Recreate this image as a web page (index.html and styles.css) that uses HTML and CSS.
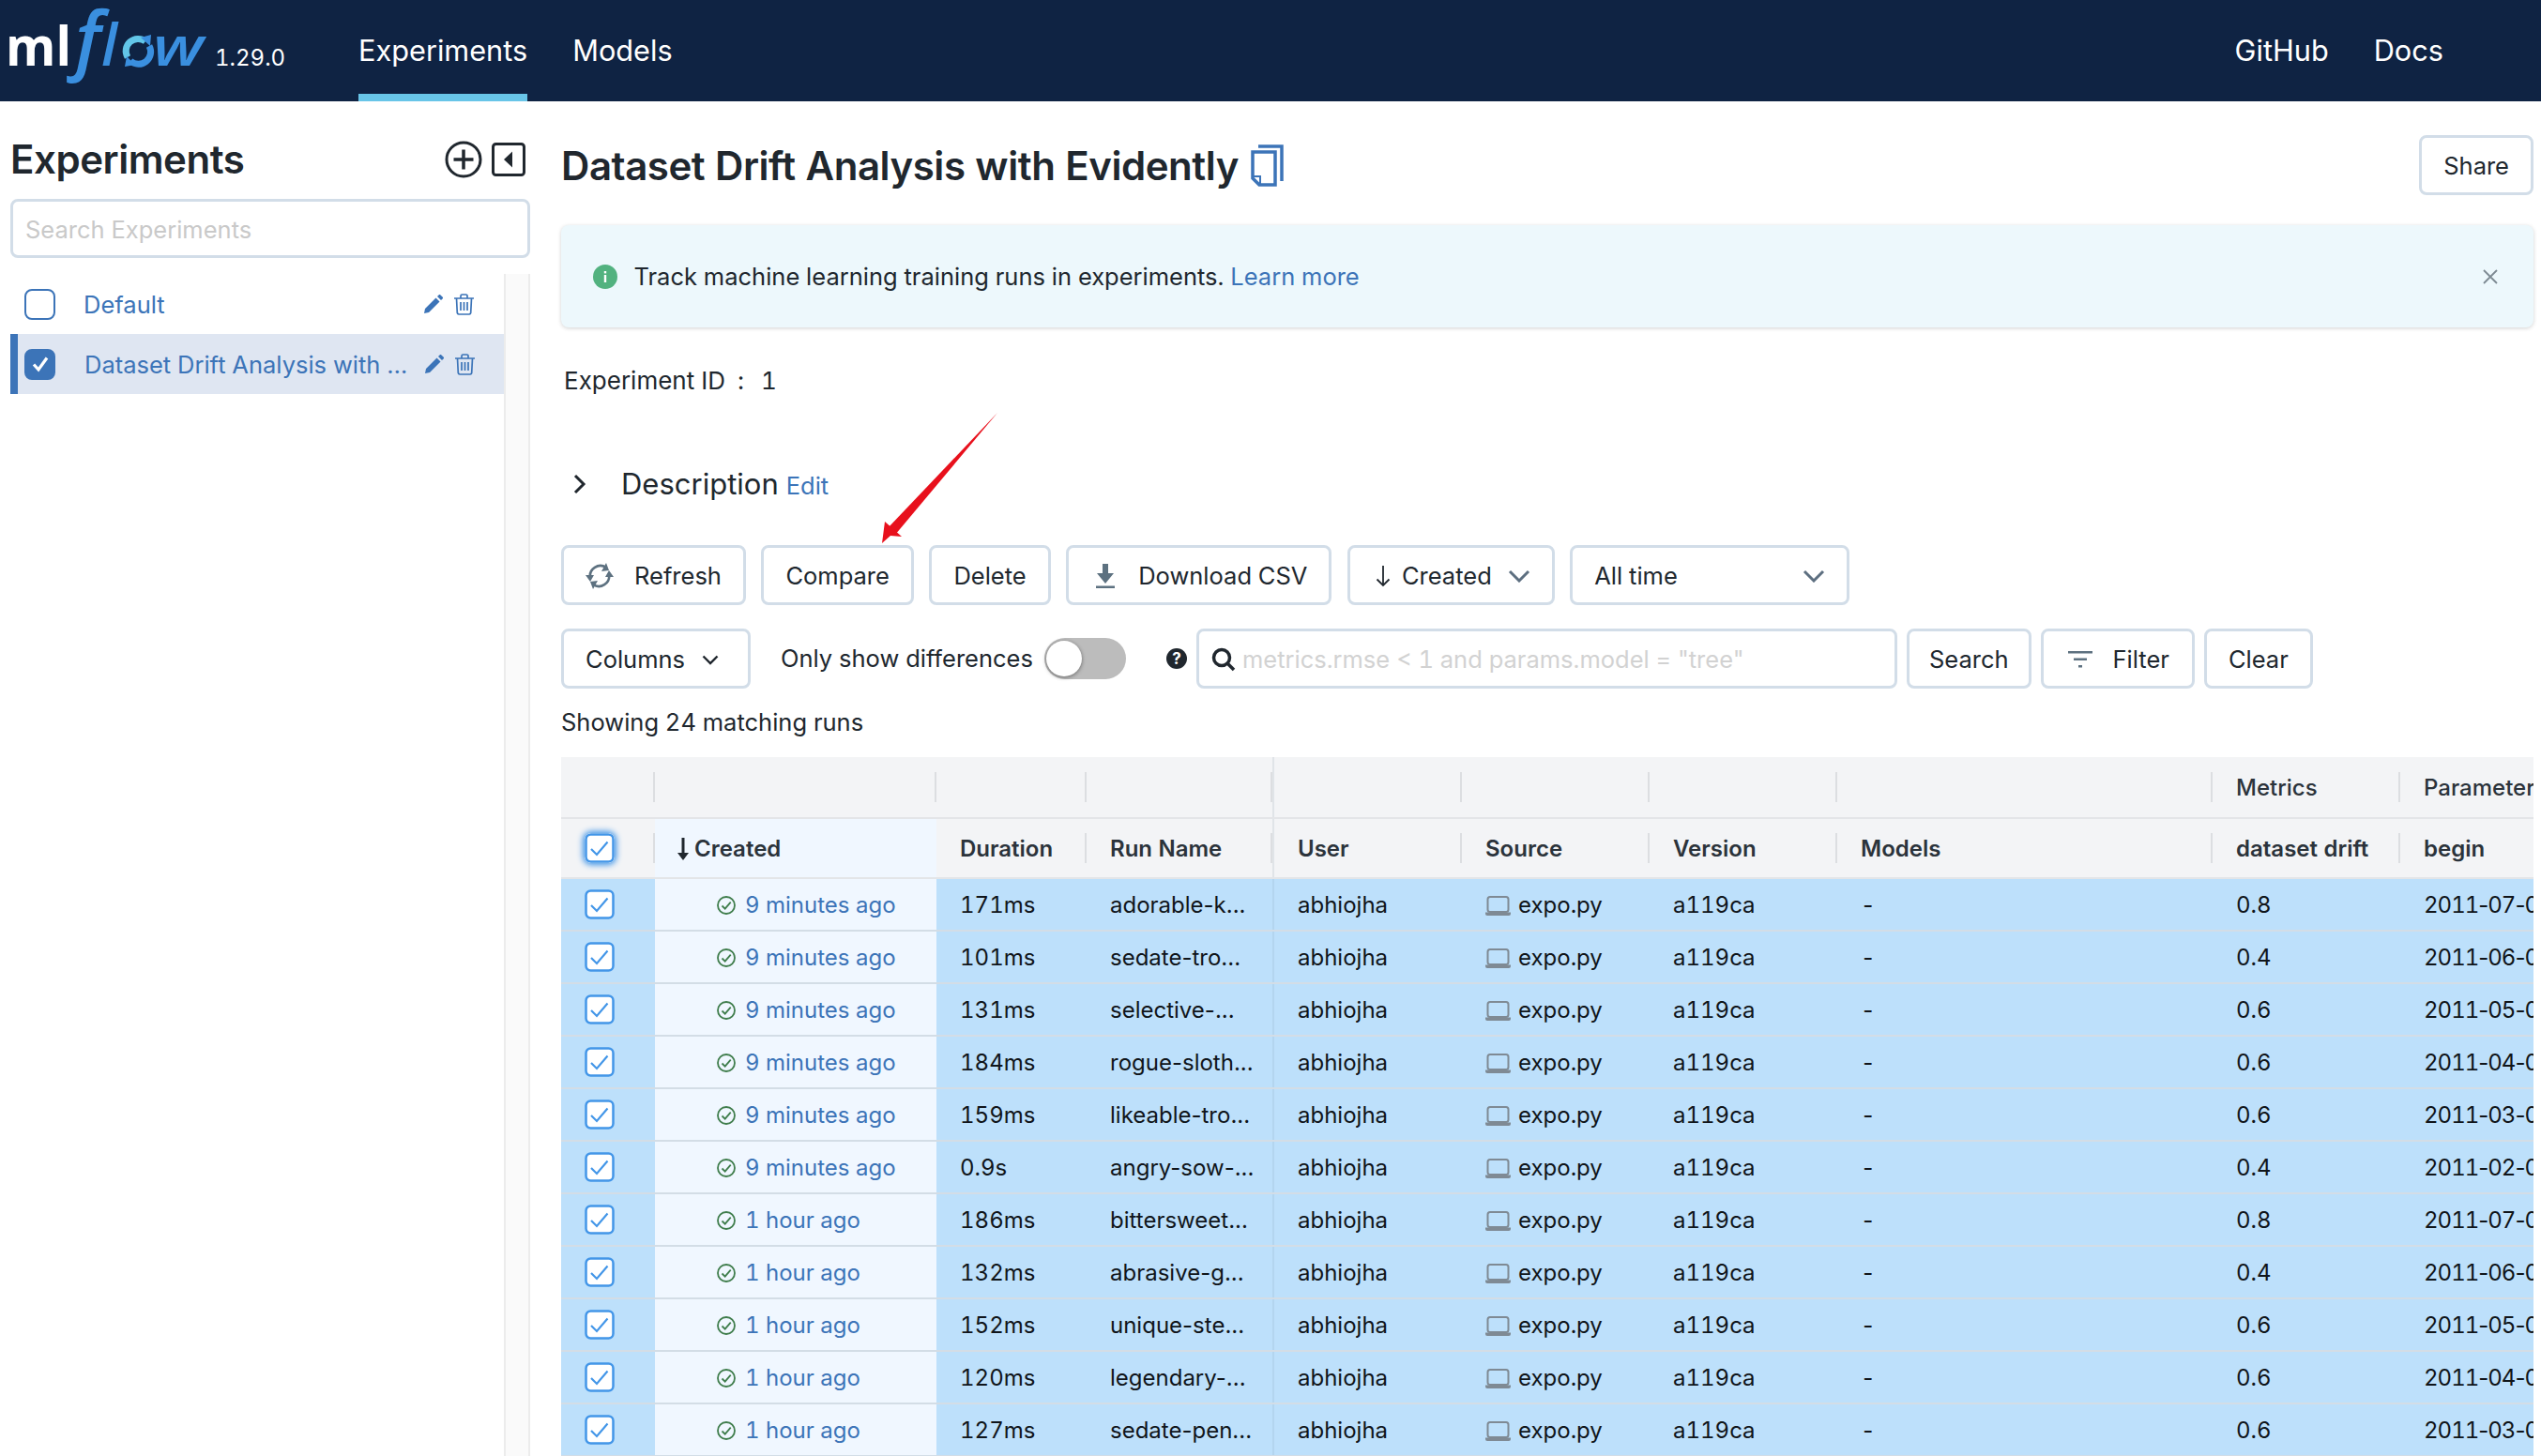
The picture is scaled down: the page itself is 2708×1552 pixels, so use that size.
FILE: index.html
```html
<!DOCTYPE html>
<html lang="en">
<head>
<meta charset="utf-8">
<title>MLflow</title>
<link rel="stylesheet" href="styles.css">
</head>
<body>
<svg class="defs" width="0" height="0">
  <symbol id="rowcheck" viewBox="0 0 32 32"><rect x="1.500" y="1.500" width="29" height="29" rx="5" fill="#fff" stroke="#4396e8" stroke-width="2.500"/><path d="M7 17l6 6L24.500 9.500" fill="none" stroke="#4396e8" stroke-width="2.200"/></symbol>
  <symbol id="ok" viewBox="0 0 20 20"><circle cx="10" cy="10" r="9" fill="none" stroke="#3f7d4c" stroke-width="1.800"/><path d="M5.500 10.500l3.200 3.200 6-7" fill="none" stroke="#3f7d4c" stroke-width="1.800"/></symbol>
  <symbol id="laptop" viewBox="0 0 27 21"><rect x="2.500" y="1" width="22" height="16" rx="2.500" fill="none" stroke="#7f8a94" stroke-width="2"/><path d="M0 17.500h27v1.500a2 2 0 0 1-2 2H2a2 2 0 0 1-2-2z" fill="#7f8a94"/></symbol>
  <symbol id="pencil" viewBox="0 0 20 20"><path d="M0 20l1-5L12.500 3.500l4 4L5 19zM14 2l1.800-1.800a1 1 0 0 1 1.400 0l2.600 2.600a1 1 0 0 1 0 1.400L18 6z" fill="#3c74b8"/></symbol>
  <symbol id="trash" viewBox="0 0 21 23"><path d="M0 5h21M7 5V2.500A1.500 1.500 0 0 1 8.500 1h4A1.500 1.500 0 0 1 14 2.500V5M2.500 5l.8 15.500A1.800 1.800 0 0 0 5 22h11a1.800 1.800 0 0 0 1.700-1.500L18.500 5M7 9v9M10.500 9v9M14 9v9" fill="none" stroke="#3c74b8" stroke-width="1.700"/></symbol>
</svg>

<header class="topbar">
  <div class="brand">
    <svg class="logo" width="222" height="92" viewBox="0 0 222 92">
      <text x="6" y="70" class="logo-ml" textLength="70" lengthAdjust="spacingAndGlyphs">ml</text>
      <text x="80" y="70" class="logo-f">f</text>
      <text x="108" y="70" class="logo-l">l</text>
      <path d="M136 61a13 13 0 0 1 19-17" fill="none" stroke="#62c6e8" stroke-width="7"/>
      <path d="M159 49a13 13 0 0 1-20 16" fill="none" stroke="#3a8fdf" stroke-width="7"/>
      <path d="M150 40l11-3-1 12zM144 69l-11 2 2-11z" fill="#3a8fdf"/>
      <text x="163" y="70" class="logo-w" textLength="54" lengthAdjust="spacingAndGlyphs">w</text>
    </svg>
    <span class="version">1.29.0</span>
  </div>
  <nav class="nav-left">
    <a class="nav-link active">Experiments</a>
    <a class="nav-link">Models</a>
  </nav>
  <nav class="nav-right">
    <a class="nav-link">GitHub</a>
    <a class="nav-link">Docs</a>
  </nav>
</header>

<div class="layout">
  <aside class="sidebar">
    <div class="side-head">
      <h2 class="side-title">Experiments</h2>
      <svg class="icon-plus" width="40" height="40" viewBox="0 0 40 40"><circle cx="20" cy="20" r="18" fill="none" stroke="#20272e" stroke-width="3"/><path d="M20 9.500v21M9.500 20h21" stroke="#20272e" stroke-width="3.500"/></svg>
      <svg class="icon-panel" width="36" height="36" viewBox="0 0 36 36"><rect x="1.500" y="1.500" width="33" height="33" rx="3" fill="none" stroke="#20272e" stroke-width="3"/><path d="M22 9.500v17L13 18z" fill="#20272e"/></svg>
    </div>
    <div class="side-search">Search Experiments</div>
    <div class="side-list-wrap">
      <ul class="side-list">
        <li class="side-row">
          <span class="box"></span>
          <span class="side-name">Default</span>
          <svg class="act-pencil" width="20" height="20"><use href="#pencil"/></svg>
          <svg class="act-trash" width="21" height="23"><use href="#trash"/></svg>
        </li>
        <li class="side-row selected">
          <span class="box checked"><svg width="20" height="20" viewBox="0 0 20 20"><path d="M3 10.500l5 5.500L17 3.500" fill="none" stroke="#fff" stroke-width="3.200"/></svg></span>
          <span class="side-name">Dataset Drift Analysis with Evidently</span>
          <svg class="act-pencil" width="20" height="20"><use href="#pencil"/></svg>
          <svg class="act-trash" width="21" height="23"><use href="#trash"/></svg>
        </li>
      </ul>
      <div class="side-scroll"></div>
    </div>
  </aside>

  <main class="main">
    <div class="title-row">
      <h1 class="page-title">Dataset Drift Analysis with Evidently</h1>
      <svg class="icon-copy" width="35" height="45" viewBox="0 0 35 45"><path d="M8 2h25v37" fill="none" stroke="#3c74b8" stroke-width="3.500"/><path d="M2 8h24v35H9l-7-7z" fill="none" stroke="#3c74b8" stroke-width="3.500"/><path d="M2 34h8v9" fill="none" stroke="#3c74b8" stroke-width="2"/></svg>
      <button class="btn share">Share</button>
    </div>

    <div class="banner">
      <svg class="icon-info" width="26" height="26" viewBox="0 0 26 26"><circle cx="13" cy="13" r="13" fill="#52b27f"/><rect x="11.800" y="11" width="2.400" height="8" fill="#fff"/><rect x="11.800" y="7" width="2.400" height="2.400" fill="#fff"/></svg>
      <span class="banner-text">Track machine learning training runs in experiments. <a class="link">Learn more</a></span>
      <svg class="icon-close" width="18" height="18" viewBox="0 0 18 18"><path d="M2 2l14 14M16 2L2 16" stroke="#7d8a92" stroke-width="1.800"/></svg>
    </div>

    <div class="exp-id"><span>Experiment ID</span><span class="colon">:</span><span>1</span></div>

    <div class="desc-row">
      <svg class="icon-chevron" width="14" height="22" viewBox="0 0 14 22"><path d="M2 2l9 9-9 9" fill="none" stroke="#20272e" stroke-width="3"/></svg>
      <span class="desc-label">Description</span>
      <a class="link desc-edit">Edit</a>
    </div>

    <div class="toolbar tb-one">
      <button class="btn"><svg class="btn-icon refresh" width="30" height="28" viewBox="0 0 30 28"><path d="M5 16a11 11 0 0 1 17-11M25 12a11 11 0 0 1-17 11" fill="none" stroke="#5d7180" stroke-width="2.600"/><path d="M22 0l3 8-8 1zM8 28l-3-8 8-1zM0 13h9l-4 7zM30 15h-9l4-7z" fill="#5d7180"/></svg>Refresh</button>
      <button class="btn">Compare</button>
      <button class="btn">Delete</button>
      <button class="btn"><svg class="btn-icon dl" width="22" height="26" viewBox="0 0 22 26"><path d="M8 0h6v10h6l-9 11-9-11h6zM1 23.500h20V26H1z" fill="#5d7180"/></svg>Download CSV</button>
      <button class="btn sel-created"><svg class="arrow-down" width="16" height="24" viewBox="0 0 16 24"><path d="M8 1v21M1.500 15.500L8 22l6.500-6.500" fill="none" stroke="#20272e" stroke-width="1.800"/></svg>Created<svg class="caret" width="24" height="14" viewBox="0 0 24 14"><path d="M2 2l10 10L22 2" fill="none" stroke="#5d6f80" stroke-width="3"/></svg></button>
      <button class="btn sel-time">All time<svg class="caret" width="24" height="14" viewBox="0 0 24 14"><path d="M2 2l10 10L22 2" fill="none" stroke="#5d6f80" stroke-width="3"/></svg></button>
    </div>

    <div class="toolbar tb-two">
      <button class="btn cols">Columns<svg class="caret-sm" width="18" height="11" viewBox="0 0 18 11"><path d="M1.500 1.500L9 9l7.500-7.500" fill="none" stroke="#20272e" stroke-width="2.400"/></svg></button>
      <span class="only-label">Only show differences</span>
      <span class="toggle"><span class="knob"></span></span>
      <svg class="icon-help" width="22" height="22" viewBox="0 0 22 22"><circle cx="11" cy="11" r="11" fill="#20272e"/><text x="11" y="17" class="help-mark">?</text></svg>
      <div class="query">
        <svg class="icon-search" width="26" height="26" viewBox="0 0 26 26"><circle cx="11" cy="11" r="8.500" fill="none" stroke="#20272e" stroke-width="3.500"/><path d="M17 17l7 7" stroke="#20272e" stroke-width="3.500"/></svg>
        <span class="placeholder">metrics.rmse &lt; 1 and params.model = "tree"</span>
      </div>
      <button class="btn tight">Search</button>
      <button class="btn filter-btn"><svg class="btn-icon filter" width="26" height="18" viewBox="0 0 26 18"><path d="M0 0h26v2.500H0zM6 7.500h14V10H6zM11 15h4v2.500h-4z" fill="#5d7180"/></svg>Filter</button>
      <button class="btn">Clear</button>
    </div>

    <p class="showing">Showing 24 matching runs</p>

    <div class="grid">
      <div class="row group-head">
        <div class="c sep"></div><div class="c sep"></div><div class="c sep"></div><div class="c sep"></div>
        <div class="c sep"></div><div class="c sep"></div><div class="c sep"></div><div class="c sep"></div>
        <div class="c sep">Metrics</div><div class="c">Parameters</div>
      </div>
      <div class="row col-head">
        <div class="c c-check sep"><svg class="rc focus" width="32" height="32"><use href="#rowcheck"/></svg></div>
        <div class="c pin sort"><svg class="sort-arrow" width="14" height="24" viewBox="0 0 14 24"><path d="M7 0v22" stroke="#20272e" stroke-width="3"/><path d="M1 16h12l-6 8z" fill="#20272e"/></svg>Created</div>
        <div class="c sep">Duration</div><div class="c sep">Run Name</div><div class="c sep">User</div><div class="c sep">Source</div><div class="c sep">Version</div><div class="c sep">Models</div><div class="c sep">dataset drift</div><div class="c">begin</div>
      </div>

      <div class="row run"><div class="c c-check"><svg class="rc" width="32" height="32"><use href="#rowcheck"/></svg></div><div class="c pin when"><svg class="st" width="20" height="20"><use href="#ok"/></svg><a class="link">9 minutes ago</a></div><div class="c">171ms</div><div class="c name">adorable-k...</div><div class="c">abhiojha</div><div class="c src"><svg class="lap" width="27" height="21"><use href="#laptop"/></svg>expo.py</div><div class="c">a119ca</div><div class="c">-</div><div class="c">0.8</div><div class="c date">2011<i>-</i>07<i>-</i>01 00:00:00</div></div>
      <div class="row run"><div class="c c-check"><svg class="rc" width="32" height="32"><use href="#rowcheck"/></svg></div><div class="c pin when"><svg class="st" width="20" height="20"><use href="#ok"/></svg><a class="link">9 minutes ago</a></div><div class="c">101ms</div><div class="c name">sedate-tro...</div><div class="c">abhiojha</div><div class="c src"><svg class="lap" width="27" height="21"><use href="#laptop"/></svg>expo.py</div><div class="c">a119ca</div><div class="c">-</div><div class="c">0.4</div><div class="c date">2011<i>-</i>06<i>-</i>01 00:00:00</div></div>
      <div class="row run"><div class="c c-check"><svg class="rc" width="32" height="32"><use href="#rowcheck"/></svg></div><div class="c pin when"><svg class="st" width="20" height="20"><use href="#ok"/></svg><a class="link">9 minutes ago</a></div><div class="c">131ms</div><div class="c name">selective-...</div><div class="c">abhiojha</div><div class="c src"><svg class="lap" width="27" height="21"><use href="#laptop"/></svg>expo.py</div><div class="c">a119ca</div><div class="c">-</div><div class="c">0.6</div><div class="c date">2011<i>-</i>05<i>-</i>01 00:00:00</div></div>
      <div class="row run"><div class="c c-check"><svg class="rc" width="32" height="32"><use href="#rowcheck"/></svg></div><div class="c pin when"><svg class="st" width="20" height="20"><use href="#ok"/></svg><a class="link">9 minutes ago</a></div><div class="c">184ms</div><div class="c name">rogue-sloth...</div><div class="c">abhiojha</div><div class="c src"><svg class="lap" width="27" height="21"><use href="#laptop"/></svg>expo.py</div><div class="c">a119ca</div><div class="c">-</div><div class="c">0.6</div><div class="c date">2011<i>-</i>04<i>-</i>01 00:00:00</div></div>
      <div class="row run"><div class="c c-check"><svg class="rc" width="32" height="32"><use href="#rowcheck"/></svg></div><div class="c pin when"><svg class="st" width="20" height="20"><use href="#ok"/></svg><a class="link">9 minutes ago</a></div><div class="c">159ms</div><div class="c name">likeable-tro...</div><div class="c">abhiojha</div><div class="c src"><svg class="lap" width="27" height="21"><use href="#laptop"/></svg>expo.py</div><div class="c">a119ca</div><div class="c">-</div><div class="c">0.6</div><div class="c date">2011<i>-</i>03<i>-</i>01 00:00:00</div></div>
      <div class="row run"><div class="c c-check"><svg class="rc" width="32" height="32"><use href="#rowcheck"/></svg></div><div class="c pin when"><svg class="st" width="20" height="20"><use href="#ok"/></svg><a class="link">9 minutes ago</a></div><div class="c">0.9s</div><div class="c name">angry-sow-...</div><div class="c">abhiojha</div><div class="c src"><svg class="lap" width="27" height="21"><use href="#laptop"/></svg>expo.py</div><div class="c">a119ca</div><div class="c">-</div><div class="c">0.4</div><div class="c date">2011<i>-</i>02<i>-</i>01 00:00:00</div></div>
      <div class="row run"><div class="c c-check"><svg class="rc" width="32" height="32"><use href="#rowcheck"/></svg></div><div class="c pin when"><svg class="st" width="20" height="20"><use href="#ok"/></svg><a class="link">1 hour ago</a></div><div class="c">186ms</div><div class="c name">bittersweet...</div><div class="c">abhiojha</div><div class="c src"><svg class="lap" width="27" height="21"><use href="#laptop"/></svg>expo.py</div><div class="c">a119ca</div><div class="c">-</div><div class="c">0.8</div><div class="c date">2011<i>-</i>07<i>-</i>01 00:00:00</div></div>
      <div class="row run"><div class="c c-check"><svg class="rc" width="32" height="32"><use href="#rowcheck"/></svg></div><div class="c pin when"><svg class="st" width="20" height="20"><use href="#ok"/></svg><a class="link">1 hour ago</a></div><div class="c">132ms</div><div class="c name">abrasive-g...</div><div class="c">abhiojha</div><div class="c src"><svg class="lap" width="27" height="21"><use href="#laptop"/></svg>expo.py</div><div class="c">a119ca</div><div class="c">-</div><div class="c">0.4</div><div class="c date">2011<i>-</i>06<i>-</i>01 00:00:00</div></div>
      <div class="row run"><div class="c c-check"><svg class="rc" width="32" height="32"><use href="#rowcheck"/></svg></div><div class="c pin when"><svg class="st" width="20" height="20"><use href="#ok"/></svg><a class="link">1 hour ago</a></div><div class="c">152ms</div><div class="c name">unique-ste...</div><div class="c">abhiojha</div><div class="c src"><svg class="lap" width="27" height="21"><use href="#laptop"/></svg>expo.py</div><div class="c">a119ca</div><div class="c">-</div><div class="c">0.6</div><div class="c date">2011<i>-</i>05<i>-</i>01 00:00:00</div></div>
      <div class="row run"><div class="c c-check"><svg class="rc" width="32" height="32"><use href="#rowcheck"/></svg></div><div class="c pin when"><svg class="st" width="20" height="20"><use href="#ok"/></svg><a class="link">1 hour ago</a></div><div class="c">120ms</div><div class="c name">legendary-...</div><div class="c">abhiojha</div><div class="c src"><svg class="lap" width="27" height="21"><use href="#laptop"/></svg>expo.py</div><div class="c">a119ca</div><div class="c">-</div><div class="c">0.6</div><div class="c date">2011<i>-</i>04<i>-</i>01 00:00:00</div></div>
      <div class="row run"><div class="c c-check"><svg class="rc" width="32" height="32"><use href="#rowcheck"/></svg></div><div class="c pin when"><svg class="st" width="20" height="20"><use href="#ok"/></svg><a class="link">1 hour ago</a></div><div class="c">127ms</div><div class="c name">sedate-pen...</div><div class="c">abhiojha</div><div class="c src"><svg class="lap" width="27" height="21"><use href="#laptop"/></svg>expo.py</div><div class="c">a119ca</div><div class="c">-</div><div class="c">0.6</div><div class="c date">2011<i>-</i>03<i>-</i>01 00:00:00</div></div>
    </div>
  </main>
</div>

<svg class="annotation" width="130" height="145" viewBox="0 0 130 145"><path d="M127 0L10 123l8 7z" fill="#e8101c"/><path d="M4 139l3-23 18 16-12-1z" fill="#e8101c"/></svg>
</body>
</html>
```

FILE: styles.css
```css
* { box-sizing: border-box; }
html, body { margin: 0; padding: 0; }
body {
  width: 2708px;
  height: 1552px;
  overflow: hidden;
  position: relative;
  background: #fff;
  color: #20272e;
  font-family: Inter, "Liberation Sans", sans-serif;
  font-size: 25.5px;
  line-height: 1.2;
  font-variant-numeric: tabular-nums;
}
.defs { display: block; height: 0; }

.topbar {
  display: flex;
  align-items: stretch;
  height: 108px;
  background: #0f2343;
  color: #fff;
}
.brand { display: flex; width: 382px; padding: 0; }
.logo { display: block; flex: none; }
.logo-ml { font: 700 58px "Open Sans", sans-serif; fill: #fff; }
.logo-f { font: italic 600 80px "Open Sans", sans-serif; fill: #3a8fdf; }
.logo-l { font: italic 600 62px "Open Sans", sans-serif; fill: #3a8fdf; }
.logo-w { font: italic 600 58px "Open Sans", sans-serif; fill: #3a8fdf; }
.version { font-size: 24px; margin: 48px 0 0 7px; }
.nav-left { display: flex; gap: 48px; }
.nav-right { display: flex; gap: 48px; margin-left: auto; padding-right: 104px; }
.nav-link {
  display: flex;
  align-items: center;
  font-size: 30.7px;
  color: #fff;
  border-bottom: 8px solid transparent;
  padding-top: 8px;
  height: 108px;
}
.nav-link.active { border-bottom-color: #68c5e8; }

.layout { display: flex; }
.sidebar { width: 598px; padding: 42px 33px 0 11px; flex: none; }
.side-head { display: flex; align-items: center; height: 40px; }
.side-title { margin: 0; font-size: 42px; font-weight: 600; letter-spacing: -0.45px; flex: 1; }
.icon-plus { margin-right: 10px; }
.icon-panel { margin-right: 5px; }
.side-search {
  margin-top: 22px;
  height: 63px;
  border: 3px solid #d2dde8;
  border-radius: 8px;
  padding: 3px 13px 0;
  display: flex;
  align-items: center;
  color: #c9c9c9;
}
.side-list-wrap { display: flex; margin-top: 17px; height: 1260px; }
.side-list { list-style: none; margin: 0; padding: 0; flex: 1; min-width: 0; }
.side-row { display: flex; align-items: center; height: 64px; padding-left: 15px; color: #3c74b8; }
.side-row.selected { background: #dfe6f2; border-left: 8px solid #3c74b8; padding-left: 7px; }
.box {
  flex: none;
  width: 33px;
  height: 33px;
  border: 2px solid #3c74b8;
  border-radius: 8px;
  display: flex;
  align-items: center;
  justify-content: center;
}
.box.checked { background: #3c74b8; }
.side-name { margin-left: 30px; width: 353px; flex: none; padding-top: 2px; white-space: nowrap; overflow: hidden; text-overflow: ellipsis; }
.selected .side-name { margin-left: 31px; }
.act-pencil { margin-left: 10px; flex: none; }
.act-trash { margin-left: 12px; flex: none; }
.side-scroll { width: 28px; flex: none; background: #fafafa; border-left: 2px solid #ececec; border-right: 2px solid #ececec; }

.main { flex: 1; min-width: 0; padding-right: 8px; }
.title-row { display: flex; align-items: center; height: 64px; margin-top: 36px; }
.page-title { margin: 0; padding-top: 2px; font-size: 42px; font-weight: 600; letter-spacing: -0.45px; white-space: nowrap; }
.icon-copy { margin-left: 13px; }
.btn {
  display: inline-flex;
  align-items: center;
  height: 64px;
  padding: 2px 23px 0;
  border: 3px solid #d2dde8;
  border-radius: 8px;
  background: #fff;
  color: #20272e;
  font: inherit;
  font-variant-numeric: tabular-nums;
  white-space: nowrap;
}
.tight { padding: 2px 21px 0; }
.share { margin-left: auto; }

.banner {
  display: flex;
  align-items: center;
  height: 109px;
  margin-top: 32px;
  padding: 0 37px 0 34px;
  background: #edf8fc;
  border-radius: 8px;
  box-shadow: 0 1px 4px rgba(0,0,0,.18);
}
.banner-text { margin-left: 17.5px; padding-top: 2px; flex: 1; }
.link { color: #3c74b8; }

.exp-id { display: flex; align-items: center; height: 40px; margin-top: 36px; padding: 1px 0 0 3px; font-size: 26px; }
.colon { margin: 0 18px 0 13px; }

.desc-row { display: flex; align-items: center; height: 48px; margin-top: 67px; padding-left: 13px; }
.desc-label { margin-left: 37px; font-size: 31px; }
.desc-edit { margin-left: 8px; padding-top: 4px; }

.toolbar { display: flex; align-items: center; }
.tb-one { margin-top: 41px; gap: 16.5px; }
.tb-two { margin-top: 25px; height: 64px; gap: 10px; }
.btn-icon { margin-right: 20px; }
.btn-icon.refresh { margin-right: 22px; }
.btn-icon.dl { margin-right: 24px; margin-left: 5px; }
.btn-icon.filter { margin: 0 22px 0 3px; }
.filter-btn { padding-right: 24px; }
.arrow-down { margin: 0 12px 0 4px; }
.caret { margin-left: 17px; }
.sel-time { width: 298px; justify-content: space-between; }
.cols { width: 202px; }
.caret-sm { margin-left: 18px; }
.only-label { margin-left: 22px; }
.toggle { margin-left: 2px; width: 87px; height: 44px; border-radius: 22px; background: #bcbcbc; display: flex; align-items: center; padding-left: 2px; }
.knob { width: 38px; height: 38px; border-radius: 50%; background: #fff; box-shadow: 0 1px 4px rgba(0,0,0,.45); }
.icon-help { margin-left: 33px; }
.help-mark { font: 700 17px Inter, sans-serif; fill: #fff; text-anchor: middle; }
.query {
  width: 747px;
  height: 64px;
  border: 3px solid #d2dde8;
  border-radius: 8px;
  display: flex;
  align-items: center;
  padding: 2px 0 0 13px;
}
.placeholder { margin-left: 7px; color: #d2d2d2; white-space: nowrap; }

.showing { margin: 19px 0 0; height: 34px; display: flex; align-items: center; }

.grid { margin-top: 20px; overflow: hidden; }
.row {
  display: grid;
  grid-template-columns: 100px 300px 160px 200px 200px 200px 200px 400px 200px 400px;
  border-bottom: 2px solid #e3e5e8;
  font-size: 24px;
  white-space: nowrap;
}
.group-head { height: 66px; background: #f3f4f6; color: #2b333b; font-weight: 500; }
.col-head { height: 64px; background: #f3f4f6; color: #2b333b; font-weight: 600; }
.run { height: 56px; background: #bde0fb; border-bottom-color: #d3dde6; color: #10151a; }
.c {
  display: flex;
  align-items: center;
  padding: 2px 0 0 25px;
  overflow: hidden;
  min-width: 0;
}
.sep { background: linear-gradient(#dcdee1, #dcdee1) right center / 2px 32px no-repeat; }
.row .c:nth-child(4) { border-right: 2px solid #e0e4e8; }
.run .c:nth-child(4) { border-right-color: #b3d5ef; }
.c-check { padding: 0 0 0 25px; }
.pin { background: #f0f7ff; }
.sort { padding-left: 23px; }
.sort-arrow { margin-right: 5px; }
.when { padding-left: 66px; }
.st { margin-right: 10px; flex: none; }
.lap { margin: 0 8px 0 0; flex: none; }
.src { padding-left: 25px; }
.name { font-variant-numeric: normal; }
.date { display: block; padding-top: 14px; letter-spacing: -1px; }
.date i { font-style: normal; font-variant-numeric: normal; }
.focus { border-radius: 7px; box-shadow: 0 0 6px 2px #4396e8; }

.annotation { position: absolute; left: 936px; top: 440px; pointer-events: none; }
```
